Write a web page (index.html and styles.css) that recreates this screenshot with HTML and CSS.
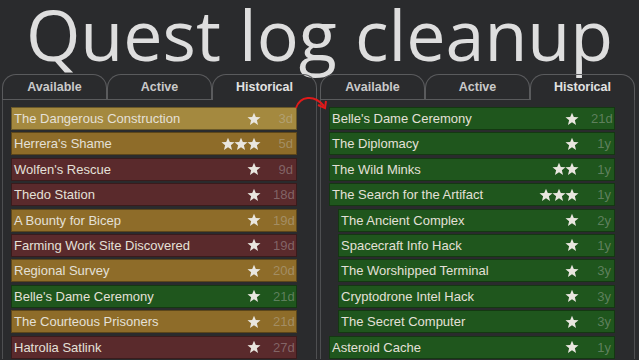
FILE: index.html
```html
<!DOCTYPE html>
<html lang="en">
<head>
    <meta charset="UTF-8">
    <title>Quest log cleanup</title>
    <link rel="stylesheet" href="styles.css">
</head>
<body>
    <h1 class="title">Quest log cleanup</h1>

    <div class="panels">
        <!-- Before -->
        <div class="panel">
            <div class="tabs">
                <div class="tab">Available</div>
                <div class="tab">Active</div>
                <div class="tab selected">Historical</div>
            </div>
            <div class="quest-list">
                <div class="quest gold bright"><span class="name">The Dangerous Construction</span><span class="stars"><svg viewBox="0 0 20 20"><polygon points="10,1 12.6,7.2 19.3,7.6 14.1,11.9 15.8,18.5 10,14.8 4.2,18.5 5.9,11.9 0.7,7.6 7.4,7.2"/></svg></span><span class="age">3d</span></div>
                <div class="quest gold"><span class="name">Herrera's Shame</span><span class="stars"><svg viewBox="0 0 20 20"><polygon points="10,1 12.6,7.2 19.3,7.6 14.1,11.9 15.8,18.5 10,14.8 4.2,18.5 5.9,11.9 0.7,7.6 7.4,7.2"/></svg><svg viewBox="0 0 20 20"><polygon points="10,1 12.6,7.2 19.3,7.6 14.1,11.9 15.8,18.5 10,14.8 4.2,18.5 5.9,11.9 0.7,7.6 7.4,7.2"/></svg><svg viewBox="0 0 20 20"><polygon points="10,1 12.6,7.2 19.3,7.6 14.1,11.9 15.8,18.5 10,14.8 4.2,18.5 5.9,11.9 0.7,7.6 7.4,7.2"/></svg></span><span class="age">5d</span></div>
                <div class="quest red"><span class="name">Wolfen's Rescue</span><span class="stars"><svg viewBox="0 0 20 20"><polygon points="10,1 12.6,7.2 19.3,7.6 14.1,11.9 15.8,18.5 10,14.8 4.2,18.5 5.9,11.9 0.7,7.6 7.4,7.2"/></svg></span><span class="age">9d</span></div>
                <div class="quest red"><span class="name">Thedo Station</span><span class="stars"><svg viewBox="0 0 20 20"><polygon points="10,1 12.6,7.2 19.3,7.6 14.1,11.9 15.8,18.5 10,14.8 4.2,18.5 5.9,11.9 0.7,7.6 7.4,7.2"/></svg></span><span class="age">18d</span></div>
                <div class="quest gold"><span class="name">A Bounty for Bicep</span><span class="stars"><svg viewBox="0 0 20 20"><polygon points="10,1 12.6,7.2 19.3,7.6 14.1,11.9 15.8,18.5 10,14.8 4.2,18.5 5.9,11.9 0.7,7.6 7.4,7.2"/></svg></span><span class="age">19d</span></div>
                <div class="quest red"><span class="name">Farming Work Site Discovered</span><span class="stars"><svg viewBox="0 0 20 20"><polygon points="10,1 12.6,7.2 19.3,7.6 14.1,11.9 15.8,18.5 10,14.8 4.2,18.5 5.9,11.9 0.7,7.6 7.4,7.2"/></svg></span><span class="age">19d</span></div>
                <div class="quest gold"><span class="name">Regional Survey</span><span class="stars"><svg viewBox="0 0 20 20"><polygon points="10,1 12.6,7.2 19.3,7.6 14.1,11.9 15.8,18.5 10,14.8 4.2,18.5 5.9,11.9 0.7,7.6 7.4,7.2"/></svg></span><span class="age">20d</span></div>
                <div class="quest green"><span class="name">Belle's Dame Ceremony</span><span class="stars"><svg viewBox="0 0 20 20"><polygon points="10,1 12.6,7.2 19.3,7.6 14.1,11.9 15.8,18.5 10,14.8 4.2,18.5 5.9,11.9 0.7,7.6 7.4,7.2"/></svg></span><span class="age">21d</span></div>
                <div class="quest gold"><span class="name">The Courteous Prisoners</span><span class="stars"><svg viewBox="0 0 20 20"><polygon points="10,1 12.6,7.2 19.3,7.6 14.1,11.9 15.8,18.5 10,14.8 4.2,18.5 5.9,11.9 0.7,7.6 7.4,7.2"/></svg></span><span class="age">21d</span></div>
                <div class="quest red"><span class="name">Hatrolia Satlink</span><span class="stars"><svg viewBox="0 0 20 20"><polygon points="10,1 12.6,7.2 19.3,7.6 14.1,11.9 15.8,18.5 10,14.8 4.2,18.5 5.9,11.9 0.7,7.6 7.4,7.2"/></svg></span><span class="age">27d</span></div>
            </div>
        </div>

        <!-- After -->
        <div class="panel">
            <div class="tabs">
                <div class="tab">Available</div>
                <div class="tab">Active</div>
                <div class="tab selected">Historical</div>
            </div>
            <div class="quest-list">
                <div class="quest green"><span class="name">Belle's Dame Ceremony</span><span class="stars"><svg viewBox="0 0 20 20"><polygon points="10,1 12.6,7.2 19.3,7.6 14.1,11.9 15.8,18.5 10,14.8 4.2,18.5 5.9,11.9 0.7,7.6 7.4,7.2"/></svg></span><span class="age">21d</span></div>
                <div class="quest green"><span class="name">The Diplomacy</span><span class="stars"><svg viewBox="0 0 20 20"><polygon points="10,1 12.6,7.2 19.3,7.6 14.1,11.9 15.8,18.5 10,14.8 4.2,18.5 5.9,11.9 0.7,7.6 7.4,7.2"/></svg></span><span class="age">1y</span></div>
                <div class="quest green"><span class="name">The Wild Minks</span><span class="stars"><svg viewBox="0 0 20 20"><polygon points="10,1 12.6,7.2 19.3,7.6 14.1,11.9 15.8,18.5 10,14.8 4.2,18.5 5.9,11.9 0.7,7.6 7.4,7.2"/></svg><svg viewBox="0 0 20 20"><polygon points="10,1 12.6,7.2 19.3,7.6 14.1,11.9 15.8,18.5 10,14.8 4.2,18.5 5.9,11.9 0.7,7.6 7.4,7.2"/></svg></span><span class="age">1y</span></div>
                <div class="quest green"><span class="name">The Search for the Artifact</span><span class="stars"><svg viewBox="0 0 20 20"><polygon points="10,1 12.6,7.2 19.3,7.6 14.1,11.9 15.8,18.5 10,14.8 4.2,18.5 5.9,11.9 0.7,7.6 7.4,7.2"/></svg><svg viewBox="0 0 20 20"><polygon points="10,1 12.6,7.2 19.3,7.6 14.1,11.9 15.8,18.5 10,14.8 4.2,18.5 5.9,11.9 0.7,7.6 7.4,7.2"/></svg><svg viewBox="0 0 20 20"><polygon points="10,1 12.6,7.2 19.3,7.6 14.1,11.9 15.8,18.5 10,14.8 4.2,18.5 5.9,11.9 0.7,7.6 7.4,7.2"/></svg></span><span class="age">1y</span></div>
                <div class="quest green sub"><span class="name">The Ancient Complex</span><span class="stars"><svg viewBox="0 0 20 20"><polygon points="10,1 12.6,7.2 19.3,7.6 14.1,11.9 15.8,18.5 10,14.8 4.2,18.5 5.9,11.9 0.7,7.6 7.4,7.2"/></svg></span><span class="age">2y</span></div>
                <div class="quest green sub"><span class="name">Spacecraft Info Hack</span><span class="stars"><svg viewBox="0 0 20 20"><polygon points="10,1 12.6,7.2 19.3,7.6 14.1,11.9 15.8,18.5 10,14.8 4.2,18.5 5.9,11.9 0.7,7.6 7.4,7.2"/></svg></span><span class="age">1y</span></div>
                <div class="quest green sub"><span class="name">The Worshipped Terminal</span><span class="stars"><svg viewBox="0 0 20 20"><polygon points="10,1 12.6,7.2 19.3,7.6 14.1,11.9 15.8,18.5 10,14.8 4.2,18.5 5.9,11.9 0.7,7.6 7.4,7.2"/></svg></span><span class="age">3y</span></div>
                <div class="quest green sub"><span class="name">Cryptodrone Intel Hack</span><span class="stars"><svg viewBox="0 0 20 20"><polygon points="10,1 12.6,7.2 19.3,7.6 14.1,11.9 15.8,18.5 10,14.8 4.2,18.5 5.9,11.9 0.7,7.6 7.4,7.2"/></svg></span><span class="age">3y</span></div>
                <div class="quest green sub"><span class="name">The Secret Computer</span><span class="stars"><svg viewBox="0 0 20 20"><polygon points="10,1 12.6,7.2 19.3,7.6 14.1,11.9 15.8,18.5 10,14.8 4.2,18.5 5.9,11.9 0.7,7.6 7.4,7.2"/></svg></span><span class="age">3y</span></div>
                <div class="quest green"><span class="name">Asteroid Cache</span><span class="stars"><svg viewBox="0 0 20 20"><polygon points="10,1 12.6,7.2 19.3,7.6 14.1,11.9 15.8,18.5 10,14.8 4.2,18.5 5.9,11.9 0.7,7.6 7.4,7.2"/></svg></span><span class="age">1y</span></div>
            </div>
        </div>

        <!-- Red arrow from old list to new list -->
        <svg class="arrow" viewBox="0 0 40 24">
            <path d="M2 16 C 6 4, 20 2, 30 14" />
            <path d="M24 13 L31 16 L32 9" />
        </svg>
    </div>
</body>
</html>
```

FILE: styles.css
```css
/* Page */
body {
    margin: 0;
    width: 639px;
    height: 360px;
    overflow: hidden;
    background-color: #2a2b2d;
    font-family: "Liberation Sans", Arial, sans-serif;
}

/* Big heading */
.title {
    margin: 0;
    padding-top: 6px;
    height: 68px;
    font-family: "Open Sans", sans-serif;
    font-weight: normal;
    font-size: 70px;
    line-height: 56px;
    color: #dedede;
    text-align: center;
    white-space: nowrap;
}

/* Two quest log panels side by side */
.panels {
    position: relative;
    display: flex;
    gap: 3px;
    padding-left: 2px;
}

.panel {
    width: 315px;
    display: flex;
    flex-direction: column;
}

/* Tabs */
.tabs {
    display: flex;
    height: 26px;
}

.tab {
    flex: 1;
    border: 1px solid #5a5b5d;
    border-bottom: none;
    border-radius: 14px 14px 0 0;
    color: #c9c9c9;
    font-size: 12.5px;
    font-weight: bold;
    text-align: center;
    line-height: 24px;
    box-shadow: inset 0 -1px 0 #5a5b5d;
}

.tab.selected {
    color: #e2e2e2;
    box-shadow: none;
}

/* Quest list */
.quest-list {
    border-left: 1px solid #4e4f51;
    border-right: 1px solid #4e4f51;
    padding: 7px 19px 0 8px;
    display: flex;
    flex-direction: column;
    gap: 2.4px;
}

.quest {
    display: flex;
    align-items: center;
    height: 23px;
    padding: 0 3px 0 2px;
    border: 1px solid rgba(0, 0, 0, 0.35);
    box-sizing: border-box;
    color: #e4e0d8;
    font-size: 13px;
}

.quest.sub {
    margin-left: 9px;
}

.gold {
    background-color: #8e6c29;
}

.gold.bright {
    background-color: #a4893f;
}

.red {
    background-color: #5a2a2c;
}

.green {
    background-color: #1f561d;
}

.name {
    flex: 1;
    white-space: nowrap;
}

.stars {
    display: flex;
    margin-right: 12px;
}

.stars svg {
    width: 14px;
    height: 14px;
    margin-left: -1px;
    fill: #e9e6df;
}

.age {
    width: 20px;
    text-align: right;
    color: rgba(200, 200, 200, 0.38);
}

/* Red arrow overlay */
.arrow {
    position: absolute;
    left: 294px;
    top: 18px;
    width: 40px;
    height: 24px;
    fill: none;
    stroke: #e01a1a;
    stroke-width: 2;
}
```
